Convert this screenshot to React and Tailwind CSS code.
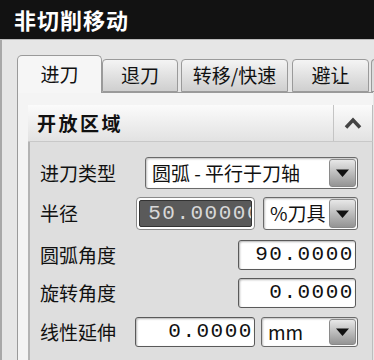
const cjk = { fontFamily: "'Noto Sans CJK SC', 'Noto Sans', sans-serif" }
const mono = { fontFamily: "'Liberation Mono', 'DejaVu Sans Mono', monospace" }

function Arrow() {
  return (
    <div className="w-[27px] self-stretch flex items-center justify-center rounded-[3px] border border-[#8a8a8a] bg-gradient-to-b from-[#e8e8e8] to-[#949494]">
      <svg width="15" height="10" viewBox="0 0 15 10">
        <path d="M1 1.5 L14 1.5 L7.5 9 Z" fill="#111" />
      </svg>
    </div>
  )
}

function Select({ text, w, h }) {
  return (
    <div className={`flex items-stretch bg-white border border-[#6a6a6a] rounded-[3px] shadow-[inset_1px_1px_2px_rgba(0,0,0,0.25)] p-[1px] ${w} ${h}`}>
      <div className="flex-1 flex items-center pl-[5px] text-[19px] text-[#111] whitespace-nowrap overflow-hidden" style={cjk}>{text}</div>
      <Arrow />
    </div>
  )
}

function NumInput({ value, w, h, dark }) {
  if (dark) {
    return (
      <div className={`border border-[#8a8a8a] rounded-[4px] bg-white p-[2px] ${w} ${h}`}>
        <div className="h-full rounded-[2px] bg-[#5a5a5a] border border-[#333] flex items-center justify-end overflow-hidden">
          <span className="text-[21px] tracking-[1.5px] text-[#d8d8d8] whitespace-nowrap -mr-[10px]" style={mono}>{value}</span>
        </div>
      </div>
    )
  }
  return (
    <div className={`bg-white border border-[#5a5a5a] rounded-[3px] shadow-[inset_1px_1px_2px_rgba(0,0,0,0.3)] flex items-center justify-end overflow-hidden ${w} ${h}`}>
      <span className="text-[21px] tracking-[1.5px] text-[#111] whitespace-nowrap -mr-[13px]" style={mono}>{value}</span>
    </div>
  )
}

function Label({ children }) {
  return <span className="flex-1 text-[19px] text-[#111] whitespace-nowrap" style={cjk}>{children}</span>
}

export default function App() {
  const tabs = [
    { name: '退刀', w: 'w-[76px]', ml: '' },
    { name: '转移/快速', w: 'w-[107px]', ml: 'ml-[3px]' },
    { name: '避让', w: 'w-[77px]', ml: 'ml-[4px]' },
  ]

  return (
    <div className="w-[374px] h-[360px] overflow-hidden bg-[#e6e6e6] flex flex-col" style={cjk}>
      {/* title bar */}
      <div className="h-[40px] shrink-0 bg-[#121212] flex items-center pl-[14px] border-b border-[#bbb]">
        <span className="text-white font-bold text-[22px] tracking-[1px]">非切削移动</span>
      </div>

      <div className="flex-1 flex border-l-2 border-[#a8a8a8] pl-[15px]">
        <div className="flex-1 flex flex-col">
          {/* tabs */}
          <div className="flex items-end mt-[14px] h-[38px] shrink-0">
            <div className="w-[85px] h-[38px] bg-[#f6f6f6] border border-b-0 border-[#9a9a9a] rounded-t-[5px] flex items-center justify-center text-[19px] text-[#111] relative z-10 -mb-[1px]">
              进刀
            </div>
            {tabs.map(t => (
              <div key={t.name}
                className={`${t.w} ${t.ml} h-[33px] border border-[#9a9a9a] rounded-t-[4px] bg-gradient-to-b from-[#f4f4f4] to-[#cfcfcf] flex items-center justify-center text-[19px] text-[#111]`}>
                {t.name}
              </div>
            ))}
            <div className="w-[6px] ml-[2px] h-[33px] border border-r-0 border-[#9a9a9a] rounded-tl-[4px] bg-[#dcdcdc]" />
          </div>

          {/* panel */}
          <div className="flex-1 w-[356px] bg-[#f4f4f4] border-l border-t border-[#9a9a9a] pl-[10px] pt-[12px]">
            {/* section header */}
            <div className="h-[37px] flex bg-gradient-to-b from-[#fbfbfb] to-[#e2e2e2] border-b border-[#c8c8c8] border-r border-r-[#bdbdbd]">
              <div className="flex-1 flex items-center pl-[9px] font-bold text-[19px] text-[#111] tracking-[2.5px]">开放区域</div>
              <div className="w-[39px] border-l border-[#c4c4c4] flex items-center justify-center">
                <svg width="18" height="12" viewBox="0 0 18 12">
                  <path d="M2 10.5 L9 3 L16 10.5" fill="none" stroke="#444" strokeWidth="3.5" />
                </svg>
              </div>
            </div>

            {/* content */}
            <div className="h-full bg-[#dedede] border-l-2 border-[#b4b4b4] border-r border-r-[#bdbdbd] pl-[10px] pr-[14px] pt-[15px]">
              <div className="flex items-center h-[32px]">
                <Label>进刀类型</Label>
                <Select text="圆弧 - 平行于刀轴" w="w-[213px]" h="h-[32px]" />
              </div>
              <div className="flex items-center h-[33px] mt-[8px]">
                <Label>半径</Label>
                <NumInput value="50.00000" w="w-[119px]" h="h-[33px]" dark />
                <div className="ml-[8px]"><Select text="%刀具" w="w-[95px]" h="h-[33px]" /></div>
              </div>
              <div className="flex items-center h-[30px] mt-[10px]">
                <Label>圆弧角度</Label>
                <div className="mr-[2px]"><NumInput value="90.00000" w="w-[118px]" h="h-[30px]" /></div>
              </div>
              <div className="flex items-center h-[30px] mt-[8px]">
                <Label>旋转角度</Label>
                <div className="mr-[2px]"><NumInput value="0.00000" w="w-[118px]" h="h-[30px]" /></div>
              </div>
              <div className="flex items-center h-[30px] mt-[9px]">
                <Label>线性延伸</Label>
                <NumInput value="0.00000" w="w-[120px]" h="h-[30px]" />
                <div className="ml-[6px]"><Select text="mm" w="w-[97px]" h="h-[30px]" /></div>
              </div>
            </div>
          </div>
        </div>
      </div>
    </div>
  )
}
